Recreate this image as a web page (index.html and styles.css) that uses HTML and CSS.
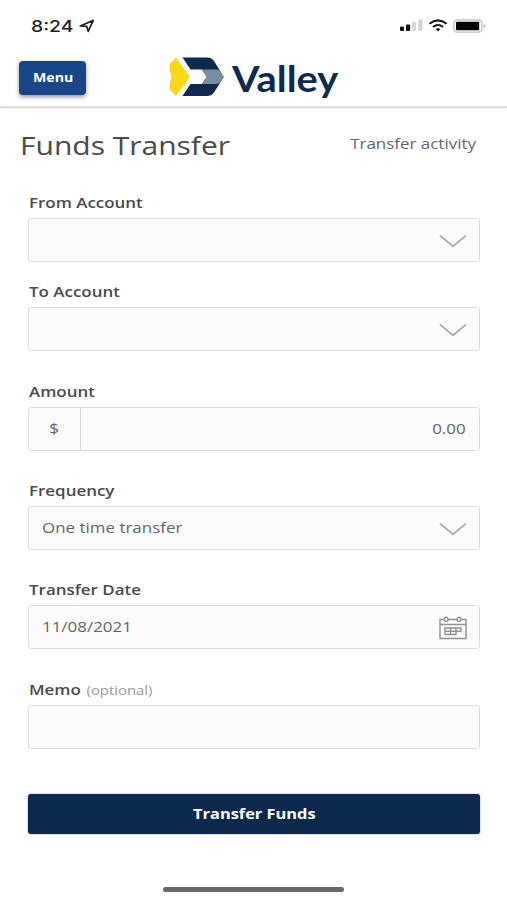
FILE: index.html
```html
<!DOCTYPE html>
<html lang="en">
<head>
<meta charset="utf-8">
<title>Funds Transfer</title>
<link rel="stylesheet" href="styles.css">
</head>
<body>
<div class="status">
  <div class="clock"><span class="wide">8:24</span>
    <svg width="16" height="14" viewBox="0 0 16 14"><path d="M1.3 7 14.3 1.4 9.2 12.3 7.8 7.4Z" fill="none" stroke="#222" stroke-width="1.7" stroke-linejoin="round"/></svg>
  </div>
  <svg width="88" height="18" viewBox="0 0 88 18">
    <rect x="1" y="9.5" width="4" height="4.5" rx="1" fill="#111"/><rect x="7" y="7.5" width="4.2" height="6.5" rx="1" fill="#111"/>
    <rect x="13" y="5" width="4.2" height="9" rx="1" fill="#d6d6d6"/><rect x="19.2" y="2.5" width="4.4" height="11.5" rx="1" fill="#d6d6d6"/>
    <g fill="none" stroke="#161616" stroke-width="2.1"><path d="M30.4 6.7Q39-.1 47.6 6.7"/><path d="M34 10Q39 6 44 10"/></g><path d="M36.5 12.1Q39 10.5 41.5 12.1L39 14.5Z" fill="#161616"/>
    <rect x="54.8" y="2.8" width="28" height="12.4" rx="3.6" fill="#fff" stroke="#cfcfcf" stroke-width="1.8"/><rect x="57" y="4.7" width="23.2" height="8.6" rx="1" fill="#050505"/><path d="M84.6 7v4Q86.6 10.5 86.6 9T84.6 7Z" fill="#bbb"/>
  </svg>
</div>
<header class="header">
  <button class="menu"><span class="wide">Menu</span></button>
  <div class="brand">
    <svg width="56" height="40" viewBox="0 0 56 40">
      <path d="M7 .6 20.8 19.8 7 39 .6 32.5V26L2.4 20 .6 13.5V7Z" fill="#fbd814"/>
      <path d="M13.5.6H38Q42.5.6 45 4L54.7 20H38L33 12.6H21.5Z" fill="#10294f"/>
      <path d="M21.5 27H33L38 20H54.7L45 35.5Q42.5 39 38 39H13.5Z" fill="#10294f"/>
      <path d="M32.5 12.6H47Q50.5 12.6 52 15.5L54.7 19.8 52 24Q50.5 27 47 27H32.5L37.5 19.8Z" fill="#788e9c"/>
    </svg>
    <span class="wordmark">Valley</span>
  </div>
</header>
<main>
  <div class="heading"><h1><span class="wide">Funds Transfer</span></h1><a class="activity"><span class="wide right">Transfer activity</span></a></div>
  <form class="form">
    <div class="field tight"><label><span class="wide">From Account</span></label>
      <div class="box"><svg class="chevron" width="28" height="14" viewBox="0 0 28 14"><path d="M1 1.5 14 12.3 27 1.5"/></svg></div></div>
    <div class="field"><label><span class="wide">To Account</span></label>
      <div class="box"><svg class="chevron" width="28" height="14" viewBox="0 0 28 14"><path d="M1 1.5 14 12.3 27 1.5"/></svg></div></div>
    <div class="field"><label><span class="wide">Amount</span></label>
      <div class="box money"><div class="currency"><span class="wide center">$</span></div><span class="wide right">0.00</span></div></div>
    <div class="field"><label><span class="wide">Frequency</span></label>
      <div class="box"><span class="wide">One time transfer</span><svg class="chevron" width="28" height="14" viewBox="0 0 28 14"><path d="M1 1.5 14 12.3 27 1.5"/></svg></div></div>
    <div class="field"><label><span class="wide">Transfer Date</span></label>
      <div class="box"><span class="wide">11/08/2021</span>
        <svg class="calendar" width="28" height="24" viewBox="0 0 28 24"><path d="M5 3.5H1V22.5H27V3.5H23M9 3.5H18M1 8.5H27"/><circle cx="7" cy="3.3" r="2"/><circle cx="20" cy="3.3" r="2"/><path d="M6 12H22V15.2H17V18.5H6ZM6 15.2H17M11.5 12V18.5M17 12V15.2"/></svg></div></div>
    <div class="field"><label><span class="wide">Memo <small>(optional)</small></span></label><div class="box"></div></div>
    <button class="submit"><span class="wide center">Transfer Funds</span></button>
  </form>
</main>
<div class="home"></div>
</body>
</html>
```
FILE: styles.css
```css
* { box-sizing: border-box; }
body {
  margin: 0;
  width: 507px;
  height: 900px;
  overflow: hidden;
  display: flex;
  flex-direction: column;
  background: #fff;
  color: #4a4a4a;
  font-family: "Open Sans", "Noto Sans", sans-serif;
  font-size: 14px;
}
svg { display: block; flex: none; }
button { border: 0; padding: 0; font-family: inherit; color: #fff; }
.wide {
  display: inline-block;
  white-space: nowrap;
  transform: scaleX(1.21);
  transform-origin: left center;
}
.wide.right { transform-origin: right center; }
.wide.center { transform-origin: center; }

.status {
  height: 52px;
  padding: 0 20px 0 31px;
  display: flex;
  align-items: center;
  justify-content: space-between;
}
.clock {
  display: flex;
  align-items: center;
  gap: 14px;
  color: #222;
  font-family: Inter, sans-serif;
  font-size: 16px;
  font-weight: 500;
}
.clock .wide { width: 34px; }

.header {
  height: 56px;
  padding: 0 0 0 19px;
  display: flex;
  align-items: flex-start;
  border-bottom: 2px solid #dedede;
  box-shadow: 0 1px 2px #eee;
}
.menu {
  width: 67px;
  height: 34px;
  margin: 9px 1px 0 0;
  padding: 0 0 2px 14px;
  text-align: left;
  border-radius: 4px;
  background: #194687;
  box-shadow: 0 2px 4px #8d949f;
  font-size: 12px;
  font-weight: 700;
}
.menu .wide { transform: scaleX(1.18); }
.brand { display: flex; margin: 5px 0 0 82px; }
.wordmark {
  margin-left: 7px;
  color: #10294f;
  font-family: Lato, sans-serif;
  font-size: 37px;
  font-weight: 700;
  line-height: 42px;
  transform: scaleX(1.075);
  transform-origin: left center;
}

.heading {
  height: 75px;
  padding: 20px 31px 0 20px;
  display: flex;
  justify-content: space-between;
}
h1 { margin: 0; font-size: 25px; font-weight: 400; line-height: 34px; }
h1 .wide { transform: scaleX(1.2); }
.activity { color: #606575; line-height: 31px; }

.form { padding: 0 27px 0 28px; }
.field { margin-bottom: 20.4px; }
.field.tight { margin-bottom: 10.2px; }
label { display: block; height: 35px; padding: 10px 0 0 .5px; font-weight: 600; line-height: 20px; }
small { margin-left: 1px; color: #999; font-size: 12.3px; font-weight: 400; }
.box {
  height: 44px;
  padding: 0 12px 1px 13px;
  display: flex;
  align-items: center;
  justify-content: space-between;
  border: 1.5px solid #dedede;
  border-radius: 3px;
  background: #fcfcfc;
  color: #636363;
}
.money { padding: 0 13px 0 0; }
.currency {
  width: 52px;
  height: 100%;
  display: flex;
  align-items: center;
  justify-content: center;
  border-right: 1.5px solid #dedede;
}
.chevron { margin: 3px 0 0 auto; fill: none; stroke: #999; stroke-width: 1.5; }
.calendar { margin-top: 3px; fill: none; stroke: #919191; stroke-width: 1.4; }
.submit {
  display: block;
  width: 452px;
  height: 40px;
  margin-top: 45px;
  border-radius: 3px;
  background: #0d294d;
  box-shadow: 0 0 2px #8491a5;
  font-size: 14px;
  font-weight: 700;
}
.submit .wide { transform: scaleX(1.17); }
.home { width: 181px; height: 5px; margin: auto 0 8px 163px; border-radius: 3px; background: #686868; }
```
